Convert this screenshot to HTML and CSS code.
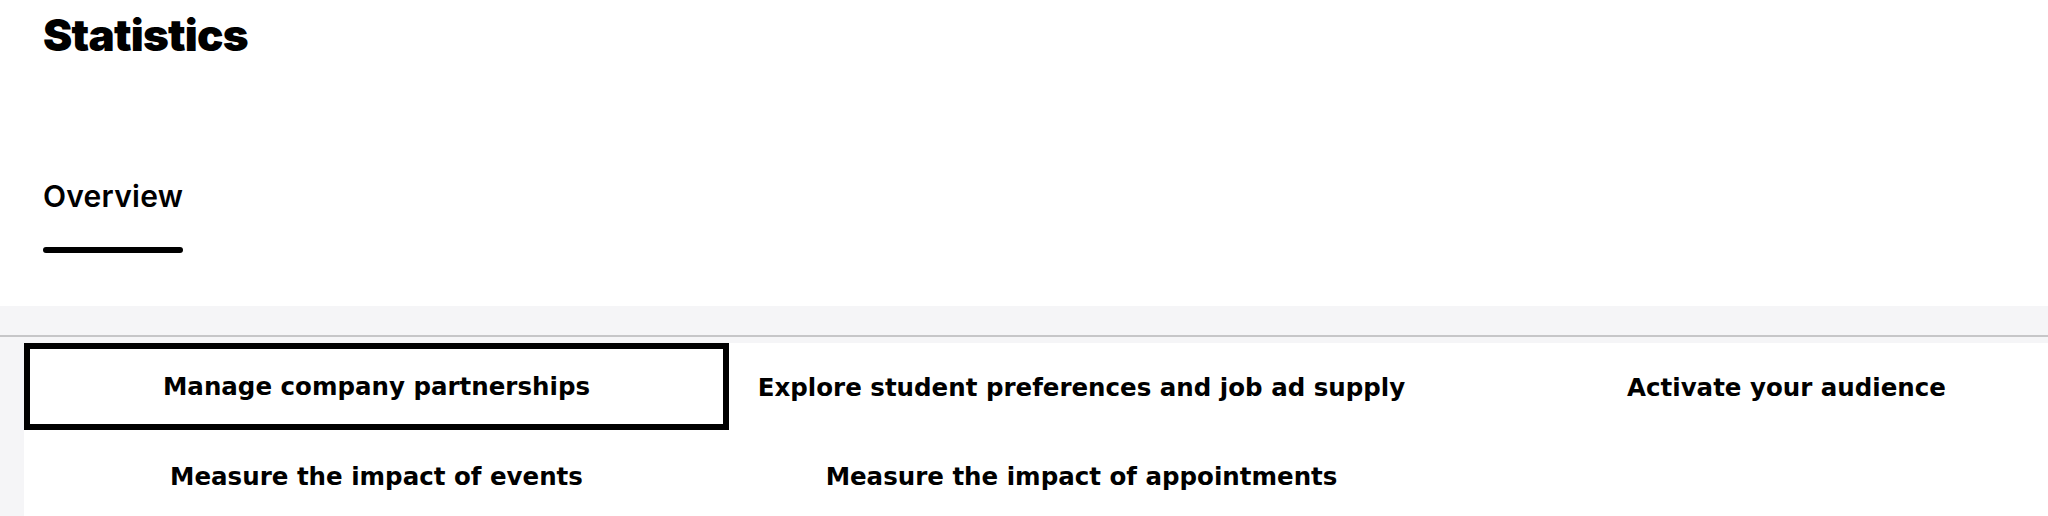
FILE: index.html
```html
<!DOCTYPE html>
<html lang="en">
<head>
<meta charset="utf-8">
<title>Statistics</title>
<link rel="stylesheet" href="styles.css">
</head>
<body>
<header class="page-header">
  <h1 class="title">Statistics</h1>
  <nav class="tabs">
    <a class="tab tab-active" href="#">Overview</a>
  </nav>
</header>
<section class="content">
  <div class="divider"></div>
  <div class="panel">
    <div class="grid">
      <a class="card card-active" href="#">Manage company partnerships</a>
      <a class="card" href="#">Explore student preferences and job ad supply</a>
      <a class="card" href="#">Activate your audience</a>
      <a class="card" href="#">Measure the impact of events</a>
      <a class="card" href="#">Measure the impact of appointments</a>
    </div>
  </div>
</section>
</body>
</html>
```
FILE: styles.css
```css
html, body {
  margin: 0;
  padding: 0;
  background: #ffffff;
  overflow: hidden;
  height: 516px;
}

.page-header {
  padding: 13px 0 53px 43px;
  font-family: Inter, "Noto Sans", sans-serif;
  color: #000;
}

.title {
  margin: 0;
  font-size: 44px;
  line-height: 1;
  font-weight: 900;
  letter-spacing: -0.8px;
}

.tabs {
  display: flex;
  margin-top: 124px;
}

.tab {
  display: flex;
  flex-direction: column;
  color: #000;
  text-decoration: none;
  font-size: 30px;
  line-height: 1;
  font-weight: 600;
  letter-spacing: 0.25px;
}

.tab-active::after {
  content: "";
  display: block;
  height: 6px;
  margin-top: 36px;
  border-radius: 3px;
  background: #000;
}

.content {
  background: #f5f5f7;
  padding-top: 29px;
  height: 181px;
}

.divider {
  height: 2px;
  background: #c6c6c8;
}

.panel {
  margin: 6px 0 0 24px;
  background: #ffffff;
  height: 173px;
  overflow: hidden;
}

.grid {
  display: grid;
  grid-template-columns: repeat(3, 705px);
  grid-auto-rows: 89px;
}

.card {
  display: flex;
  align-items: center;
  justify-content: center;
  box-sizing: border-box;
  font-family: "DejaVu Sans", Verdana, sans-serif;
  font-weight: 700;
  font-size: 24.5px;
  color: #000;
  text-decoration: none;
}

.card-active {
  border: 6px solid #000;
  height: 87px;
  align-self: start;
}
```
